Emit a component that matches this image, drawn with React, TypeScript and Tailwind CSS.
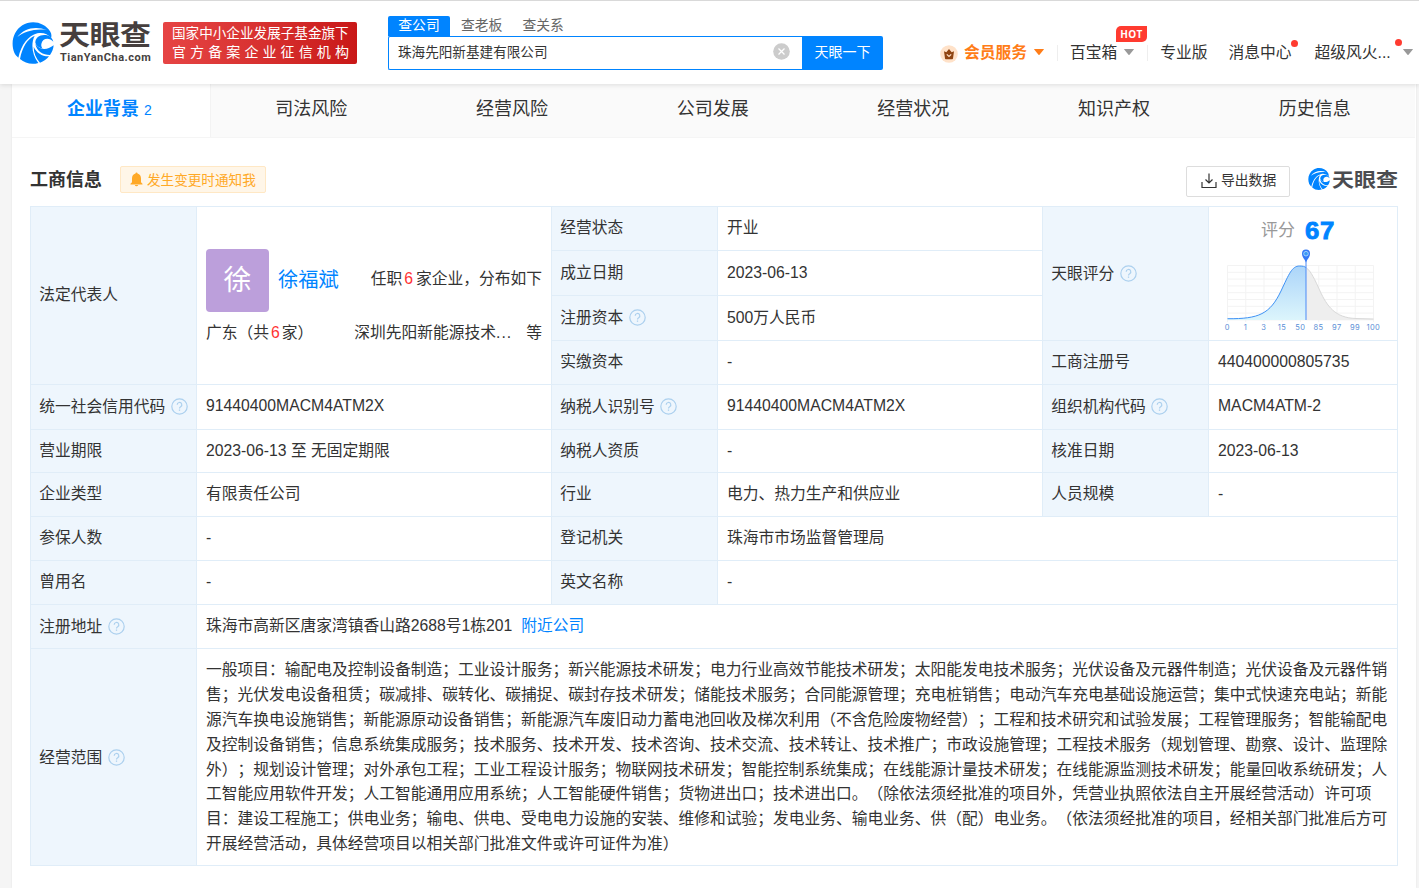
import React from "react";
import { clsx } from "clsx";

interface CellProps {
  children?: React.ReactNode;
  className?: string;
}

const TABS = ["司法风险", "经营风险", "公司发展", "经营状况", "知识产权", "历史信息"];

const SCOPE_LINES = [
  "一般项目：输配电及控制设备制造；工业设计服务；新兴能源技术研发；电力行业高效节能技术研发；太阳能发电技术服务；光伏设备及元器件制造；光伏设备及元器件销",
  "售；光伏发电设备租赁；碳减排、碳转化、碳捕捉、碳封存技术研发；储能技术服务；合同能源管理；充电桩销售；电动汽车充电基础设施运营；集中式快速充电站；新能",
  "源汽车换电设施销售；新能源原动设备销售；新能源汽车废旧动力蓄电池回收及梯次利用（不含危险废物经营）；工程和技术研究和试验发展；工程管理服务；智能输配电",
  "及控制设备销售；信息系统集成服务；技术服务、技术开发、技术咨询、技术交流、技术转让、技术推广；市政设施管理；工程技术服务（规划管理、勘察、设计、监理除",
  "外）；规划设计管理；对外承包工程；工业工程设计服务；物联网技术研发；智能控制系统集成；在线能源计量技术研发；在线能源监测技术研发；能量回收系统研发；人",
  "工智能应用软件开发；人工智能通用应用系统；人工智能硬件销售；货物进出口；技术进出口。（除依法须经批准的项目外，凭营业执照依法自主开展经营活动）许可项",
  "目：建设工程施工；供电业务；输电、供电、受电电力设施的安装、维修和试验；发电业务、输电业务、供（配）电业务。（依法须经批准的项目，经相关部门批准后方可",
  "开展经营活动，具体经营项目以相关部门批准文件或许可证件为准）",
];

const AXIS = ["0", "1", "3", "15", "50", "85", "97", "99", "100"];

const LogoMark: React.FC<{ className?: string }> = ({ className }) => (
  <svg viewBox="0 0 126 126" className={className}>
    <path
      d="M7 92C-5 62 4 27 31 10C58-8 98 0 115 29C119 36 119 43 117 49C108 35 91 30 76 34C48 42 28 68 19 107C14 102 10 98 7 92Z"
      fill="#0084ff"
    />
    <path d="M24 111C31 75 45 52 68 41C56 65 60 98 79 123C59 129 39 124 24 111Z" fill="#0084ff" />
    <path d="M65 74C74 93 91 104 111 103C105 112 95 118 84 122C72 109 65 93 65 74Z" fill="#0084ff" />
    <path d="M70 66C84 84 104 86 125 70C124 81 120 91 114 99C93 99 74 88 70 66Z" fill="#0084ff" />
    <path d="M70 62C70 46 84 37 101 39C113 41 122 49 124 59C113 46 91 47 88 66C87 72 89 76 92 80C80 77 72 71 70 62Z" fill="#0084ff" />
    <path d="M16 45C36 18 71 11 105 24C69 19 39 28 16 45Z" fill="#fff" />
  </svg>
);

const Help = () => (
  <svg viewBox="0 0 17 17" className="mb-[1px] ml-[5.500px] h-[17px] w-[17px] shrink-0" fill="none" stroke="#acd0ee">
    <circle cx="8.5" cy="8.5" r="7.7" strokeWidth="1.2" />
    <path d="M6.2 6.8a2.3 2.3 0 1 1 3.5 1.9c-.8.5-1.2.9-1.2 1.8" strokeWidth="1.2" />
    <path d="M8.5 11.5v1.3" strokeWidth="1.3" />
  </svg>
);

const Label: React.FC<CellProps & { help?: boolean }> = ({ children, className, help }) => (
  <div
    className={clsx(
      "flex items-center bg-[#eef6fd] pl-[8.250px] whitespace-nowrap",
      !help && "pb-[1px]",
      className
    )}
  >
    <span>{children}</span>
    {help && <Help />}
  </div>
);

const Value: React.FC<CellProps> = ({ children, className }) => (
  <div className={clsx("flex items-center bg-white pb-[1px] pl-[9px] whitespace-nowrap", className)}>{children}</div>
);

const Caret: React.FC<CellProps> = ({ className }) => (
  <svg viewBox="0 0 10 6" className={clsx("h-[6px] w-[10px] shrink-0", className)} fill="currentColor">
    <path d="M.5 0h9q.7 0 .3.6L5.500 5.700q-.5.500-1 0L.2.600Q-.2 0 .5 0Z" />
  </svg>
);

const ScoreChart = () => (
  <svg viewBox="0 0 170 84" className="h-[84px] w-[170px]" fill="none">
    <defs>
      <linearGradient id="scoreFill" x1="0" y1="0" x2="0" y2="1">
        <stop offset="0" stopColor="#acd5f9" />
        <stop offset="1" stopColor="#dcf5fc" />
      </linearGradient>
    </defs>
    <g stroke="#f3f3f3">
      {[0, 1, 2, 3, 4, 5, 6, 7, 8].map((i) => (
        <path key={i} d={`M${8.5 + i * 18.25} 16.5V73`} />
      ))}
      {[0, 1, 2, 3, 4, 5, 6, 7, 8].map((i) => (
        <path key={i} d={`M8.5 ${16.5 + i * 6.8}H154.5`} />
      ))}
    </g>
    <path d="M87 18.500C92 22 96 31 101 42C108 57 116 69 137 69.500L154.500 70V71H87Z" fill="#eeeeee" />
    <path d="M87 18.500C92 22 96 31 101 42C108 57 116 69 137 69.500L154.500 70" stroke="#d9d9d9" />
    <path d="M8.500 69.700C40 70 51 65 62 42C70 25 73 17 80.500 17C84 17 85.500 17.500 87 18.500V71H8.500Z" fill="url(#scoreFill)" />
    <path d="M8.500 69.700C40 70 51 65 62 42C70 25 73 17 80.500 17C84 17 85.500 17.500 87 18.500" stroke="#3f92f5" />
    <path d="M87 10V71" stroke="#4b8af7" />
    <path d="M87 13.500C85.500 9.500 83 8.500 83 4.500A4 4 0 0 1 91 4.500C91 8.500 88.500 9.500 87 13.500Z" fill="#3579f6" />
    <circle cx="87" cy="4.700" r="2.300" fill="#3b9bf4" stroke="#b9dcff" strokeWidth=".8" />
    <g fill="#5b8fd6" fontSize="7.500" fontFamily="Inter, sans-serif" textAnchor="middle" letterSpacing=".4">
      {AXIS.map((n, i) => (
        <text key={n} x={8.3 + i * 18.25} y="80.500">
          {n}
        </text>
      ))}
    </g>
  </svg>
);

const Header = () => (
  <header className="relative z-10 flex h-[84px] border-t border-[#d9d9d9] bg-white shadow-[0_1px_5px_rgba(0,0,0,0.12)]">
    <LogoMark className="mt-[21px] ml-[12px] h-[42px] w-[42px] shrink-0" />
    <div className="mt-[19px] ml-[5px] w-[94px] shrink-0 text-[#463f3e]">
      <div className="h-[31px] scale-y-[0.88] text-[31px] leading-[32px] font-bold tracking-[-0.500px] whitespace-nowrap">
        天眼查
      </div>
      <div className="ml-[1px] pt-[1px] font-[Roboto] text-[11px] leading-[12px] font-bold tracking-[0.500px]">
        TianYanCha.com
      </div>
    </div>
    <div className="mt-[21px] ml-[10px] h-[42px] w-[194px] shrink-0 rounded-[2px] bg-linear-to-r from-[#e64444] to-[#c91717] pt-[2px] pl-[9px] whitespace-nowrap text-white">
      <div className="text-[13.600px] leading-[19px]">国家中小企业发展子基金旗下</div>
      <div className="text-[14px] leading-[19px] tracking-[4.100px]">官方备案企业征信机构</div>
    </div>

    <div className="mt-[15px] ml-[31px] w-[495px] shrink-0">
      <div className="flex h-[20px] text-[13.800px] leading-[19px] text-[#666]">
        <span className="w-[62px] rounded-t-[2px] bg-[#0084ff] text-center text-white">查公司</span>
        <span className="ml-[11px]">查老板</span>
        <span className="ml-[20px]">查关系</span>
      </div>
      <div className="flex h-[34px]">
        <div className="flex w-[414px] items-center justify-between rounded-l-[2px] border border-r-0 border-[#0084ff] pr-[12px] pl-[9px] text-[13.600px] text-[#333]">
          <span>珠海先阳新基建有限公司</span>
          <svg viewBox="0 0 17 17" className="mb-[3px] h-[17px] w-[17px]">
            <circle cx="8.500" cy="8.500" r="8.300" fill="#ccc" />
            <path d="m5.500 5.500 6 6m0-6-6 6" stroke="#fff" strokeWidth="1.300" />
          </svg>
        </div>
        <div className="w-[81px] rounded-r-[2px] bg-[#0084ff] text-center text-[14px] leading-[32px] text-white">天眼一下</div>
      </div>
    </div>

    <nav className="mt-[40px] ml-[57px] flex h-[24px] items-center text-[15.750px] whitespace-nowrap text-[#333]">
      <svg viewBox="0 0 18 18" className="mt-[1px] h-[18px] w-[18px]">
        <circle cx="9" cy="9" r="8.800" fill="#ffe2c9" />
        <path
          d="M4 6.200 6.300 7.300 9 4l2.700 3.300L14 6.200l-1 7.300q-.1.700-.8.700H5.800q-.7 0-.8-.7Z"
          fill="#8f4412"
        />
        <path d="m6.800 9.300 2.200 2.200 2.200-2.200" stroke="#ffe2c9" strokeWidth="1.200" fill="none" />
      </svg>
      <span className="ml-[6px] font-bold text-[#ff7d18]">会员服务</span>
      <Caret className="mb-[2px] ml-[7px] text-[#ff7d18]" />
      <i className="ml-[13px] h-[16px] w-px bg-[#eee]" />
      <span className="relative ml-[12px]">
        百宝箱
        <b className="absolute -top-[15px] left-[46px] h-[16px] w-[31px] rounded-tl-[5px] rounded-br-[5px] bg-[#ff3b30] text-center font-[Open_Sans] text-[10px] leading-[16px] tracking-[0.300px] text-white">
          HOT
        </b>
      </span>
      <Caret className="mb-[2px] ml-[7px] text-[#999]" />
      <i className="ml-[13px] h-[16px] w-px bg-[#eee]" />
      <span className="ml-[12px]">专业版</span>
      <span className="relative ml-[21px]">
        消息中心
        <i className="absolute -top-[1px] left-[62px] h-[7px] w-[7px] rounded-full bg-[#ff3b30]" />
      </span>
      <span className="relative ml-[23px]">
        超级风火...
        <i className="absolute -top-[2px] left-[80px] h-[7px] w-[7px] rounded-full bg-[#ff3b30]" />
      </span>
      <Caret className="mb-[2px] ml-[12px] text-[#999]" />
    </nav>
  </header>
);

const LegalPerson = () => (
  <div className="row-span-4 bg-white pt-[42px] pr-[9px] pl-[9px] whitespace-nowrap">
    <div className="flex h-[63px] items-center">
      <div className="flex h-[63px] w-[63px] items-center justify-center rounded-[4px] bg-[#bc9fdb] text-[28px] text-white">
        徐
      </div>
      <span className="ml-[9px] pb-[2px] text-[20.250px] text-[#0084ff]">徐福斌</span>
      <span className="ml-auto pb-[4px]">
        任职<em className="mr-[3px] ml-[2px] text-[#f33] not-italic">6</em>家企业，分布如下
      </span>
    </div>
    <div className="mt-[9px] flex leading-[24px]">
      <span>
        广东（共<em className="mr-[2px] ml-[2px] text-[#f33] not-italic">6</em>家）
      </span>
      <span className="ml-auto">
        深圳先阳新能源技术<span className="tracking-[1px]">...</span>
      </span>
      <span className="ml-[14px]">等</span>
    </div>
  </div>
);

const InfoTable = () => (
  <div className="grid w-[1368px] grid-cols-[165px_354px_165px_324px_165px_188px] grid-rows-[43px_44px_44px_43px_44px_42px_43px_43px_43px_43px_216px] gap-px bg-[#e0edf8] p-px">
    <Label className="row-span-4">法定代表人</Label>
    <LegalPerson />
    <Label>经营状态</Label>
    <Value>开业</Value>
    <Label className="row-span-3" help>
      天眼评分
    </Label>
    <div className="row-span-3 bg-white pt-[10px]">
      <div className="flex h-[28px] items-center pl-[52px]">
        <span className="pb-[1px] text-[17px] text-[#999]">评分</span>
        <b className="ml-[10px] origin-left scale-x-[1.120] text-[23px] tracking-[0.500px] text-[#0084ff] [-webkit-text-stroke:0.8px_#0084ff]">
          67
        </b>
      </div>
      <div className="mt-[4px] ml-[10px]">
        <ScoreChart />
      </div>
    </div>
    <Label>成立日期</Label>
    <Value>2023-06-13</Value>
    <Label help>注册资本</Label>
    <Value>500万人民币</Value>
    <Label>实缴资本</Label>
    <Value>-</Value>
    <Label>工商注册号</Label>
    <Value>440400000805735</Value>

    <Label help>统一社会信用代码</Label>
    <Value className="pb-[2px]">91440400MACM4ATM2X</Value>
    <Label help>纳税人识别号</Label>
    <Value className="pb-[2px]">91440400MACM4ATM2X</Value>
    <Label help>组织机构代码</Label>
    <Value className="pb-[2px]">MACM4ATM-2</Value>

    <Label>营业期限</Label>
    <Value>2023-06-13 至 无固定期限</Value>
    <Label>纳税人资质</Label>
    <Value>-</Value>
    <Label>核准日期</Label>
    <Value>2023-06-13</Value>

    <Label>企业类型</Label>
    <Value>有限责任公司</Value>
    <Label>行业</Label>
    <Value>电力、热力生产和供应业</Value>
    <Label>人员规模</Label>
    <Value>-</Value>

    <Label>参保人数</Label>
    <Value>-</Value>
    <Label>登记机关</Label>
    <Value className="col-span-3">珠海市市场监督管理局</Value>

    <Label>曾用名</Label>
    <Value>-</Value>
    <Label>英文名称</Label>
    <Value className="col-span-3">-</Value>

    <Label help>注册地址</Label>
    <Value className="col-span-5">
      珠海市高新区唐家湾镇香山路2688号1栋201
      <a className="ml-[9px] text-[#0084ff]">附近公司</a>
    </Value>

    <Label className="pt-[2px]" help>
      经营范围
    </Label>
    <Value className="col-span-5">
      <div className="pt-[2px] leading-[24.850px]">
        {SCOPE_LINES.map((line) => (
          <p key={line}>{line}</p>
        ))}
      </div>
    </Value>
  </div>
);

export default function App() {
  return (
    <div className="h-[888px] w-[1419px] overflow-hidden bg-[#f5f5f5] font-[Liberation_Sans,Noto_Sans_CJK_SC,sans-serif] text-[15.750px] leading-[24px] text-[#333] [text-spacing-trim:space-all]">
      <Header />
      <main className="ml-[12px] h-[804px] w-[1404px] bg-white shadow-[0_0_2px_rgba(0,0,0,0.08)]">
        <div className="flex h-[54px] w-[1403px] border-b border-[#f5f5f5] bg-[#fafafa] text-[18px] leading-[51px]">
          <div className="w-[199px] shrink-0 border-r border-[#f3f3f3] bg-white pl-[55px] text-[#0084ff]">
            <b>企业背景</b>
            <span className="ml-[5px] text-[14px]">2</span>
          </div>
          {TABS.map((tab) => (
            <div key={tab} className="flex-1 text-center">
              {tab}
            </div>
          ))}
        </div>

        <section className="pl-[18px]">
          <div className="flex h-[68px] pt-[28px]">
            <h2 className="text-[18px] leading-[28px] font-bold">工商信息</h2>
            <div className="ml-[18px] flex h-[27px] w-[146px] items-center rounded-[2px] border border-[#ffe8c5] bg-[#fff6e8] pl-[9px] text-[13.600px] whitespace-nowrap text-[#ffa927]">
              <svg viewBox="0 0 13 15" className="mr-[4px] h-[15px] w-[13px]" fill="#ffa927">
                <path d="M6.500.5q1 0 1 1.100C9.800 2.200 11 4 11 6.500v3.700l1.500 1.500v.7H.5v-.7L2 10.200V6.500C2 4 3.200 2.200 5.500 1.600q0-1.100 1-1.100ZM4.800 13h3.400q-.4 1.300-1.700 1.300T4.800 13Z" />
              </svg>
              <span className="pt-[2px]">发生变更时通知我</span>
            </div>
            <div className="ml-[920px] flex h-[31px] w-[104px] items-center rounded-[2px] border border-[#ddd] pl-[14px] text-[13.800px] whitespace-nowrap">
              <svg viewBox="0 0 16 16" className="mr-[4px] mb-[2px] h-[16px] w-[16px]" fill="none" stroke="#333" strokeWidth="1.200">
                <path d="M8 .5v9.500M4.500 6.500 8 10l3.500-3.500M1 9v5.500h14V9" />
              </svg>
              <span className="pb-[1px]">导出数据</span>
            </div>
            <LogoMark className="mt-[2px] ml-[18px] h-[22px] w-[22px] shrink-0" />
            <div className="mt-[3px] ml-[2px] h-[24px] scale-y-[0.880] text-[22px] leading-[24px] font-bold whitespace-nowrap text-[#4b4c50]">
              天眼查
            </div>
          </div>
          <InfoTable />
        </section>
      </main>
    </div>
  );
}
